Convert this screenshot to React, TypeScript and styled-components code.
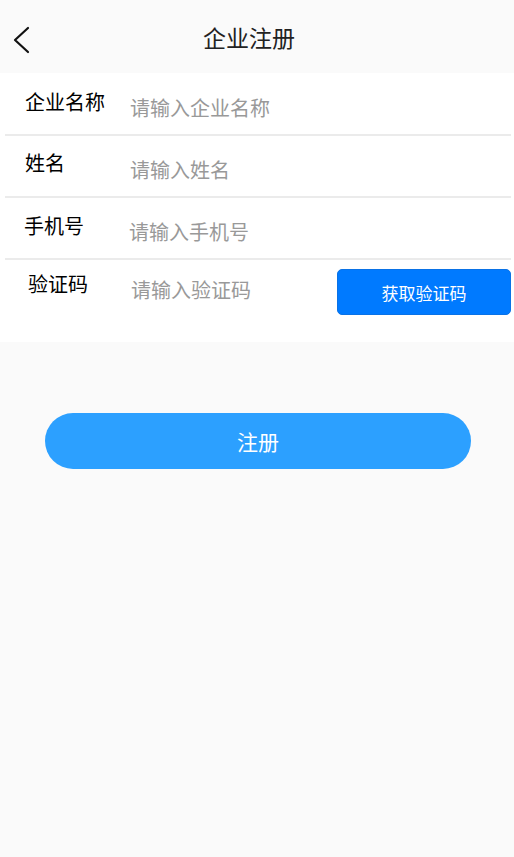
import React from 'react';
import styled, { createGlobalStyle } from 'styled-components';

const GlobalStyle = createGlobalStyle`
  html, body {
    margin: 0;
    padding: 0;
    background: #fafafa;
    font-family: "Noto Sans CJK SC", "Noto Sans", sans-serif;
  }
`;

const Page = styled.div`
  min-height: 857px;
  background: #fafafa;
`;

const Header = styled.div`
  position: relative;
  height: 73px;
  display: flex;
  align-items: center;
  justify-content: center;
  padding-right: 16px;
`;

const BackButton = styled.button`
  position: absolute;
  left: 6px;
  top: 24px;
  width: 28px;
  height: 32px;
  padding: 0;
  border: none;
  background: transparent;
  display: flex;
  align-items: center;
  justify-content: center;
`;

const Title = styled.h1`
  margin: 0;
  font-size: 23px;
  font-weight: 400;
  color: #222;
`;

const Form = styled.div`
  background: #fff;
  padding: 0 3px 0 5px;
`;

const Row = styled.div<{ $height: number; $last?: boolean }>`
  display: flex;
  align-items: flex-start;
  height: ${p => p.$height}px;
  border-bottom: ${p => (p.$last ? 'none' : '2px solid #ebebeb')};
`;

const Label = styled.label<{ $top: number; $indent: number }>`
  flex: 0 0 auto;
  width: ${p => 105 - p.$indent}px;
  margin-left: ${p => 20 + p.$indent}px;
  padding-top: ${p => p.$top}px;
  font-size: 20px;
  line-height: 24px;
  color: #000;
`;

const Input = styled.input<{ $top: number; $shift: number }>`
  flex: 1;
  min-width: 0;
  margin-top: ${p => p.$top}px;
  margin-left: ${p => p.$shift}px;
  padding: 0;
  border: none;
  outline: none;
  background: transparent;
  font-family: inherit;
  font-size: 20px;
  line-height: 24px;
  height: 24px;
  color: #333;

  &::placeholder {
    color: #999;
  }
`;

const CodeButton = styled.button`
  flex: 0 0 174px;
  height: 46px;
  margin-top: 9px;
  border: 1px solid #0a72e6;
  border-radius: 5px;
  background: #007aff;
  color: #fff;
  font-family: inherit;
  font-size: 17px;
`;

const Actions = styled.div`
  padding: 71px 43px 0 45px;
`;

const SubmitButton = styled.button`
  width: 100%;
  height: 56px;
  border: none;
  border-radius: 28px;
  background: #2ca0ff;
  color: #fff;
  font-family: inherit;
  font-size: 21px;
`;

const ChevronLeft = () => (
  <svg width="20" height="28" viewBox="0 0 20 28" fill="none">
    <path d="M18 2 L5 14 L18 26" stroke="#111" strokeWidth="2.2" strokeLinecap="round" strokeLinejoin="round" />
  </svg>
);

const fields = [
  { label: '企业名称', placeholder: '请输入企业名称', height: 61, labelTop: 17, inputTop: 23, indent: 0, shift: 0 },
  { label: '姓名', placeholder: '请输入姓名', height: 60, labelTop: 15, inputTop: 22, indent: 0, shift: 0 },
  { label: '手机号', placeholder: '请输入手机号', height: 60, labelTop: 16, inputTop: 22, indent: -1, shift: -1 },
];

export default function App() {
  return (
    <Page>
      <GlobalStyle />
      <Header>
        <BackButton aria-label="back">
          <ChevronLeft />
        </BackButton>
        <Title>企业注册</Title>
      </Header>
      <Form>
        {fields.map(f => (
          <Row key={f.label} $height={f.height}>
            <Label $top={f.labelTop} $indent={f.indent}>{f.label}</Label>
            <Input $top={f.inputTop} $shift={f.shift} placeholder={f.placeholder} />
          </Row>
        ))}
        <Row $height={82} $last>
          <Label $top={12} $indent={3}>验证码</Label>
          <Input $top={18} $shift={1} placeholder="请输入验证码" />
          <CodeButton>获取验证码</CodeButton>
        </Row>
      </Form>
      <Actions>
        <SubmitButton>注册</SubmitButton>
      </Actions>
    </Page>
  );
}
